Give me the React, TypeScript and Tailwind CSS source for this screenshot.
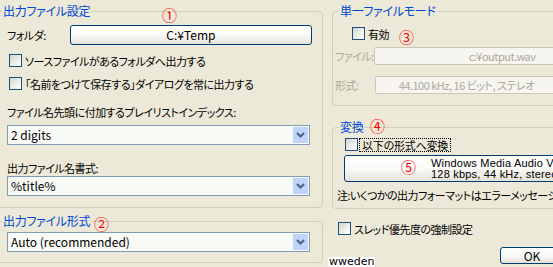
import React from 'react'

// XP style checkbox
function Check() {
  return (
    <span className="w-[13px] h-[13px] shrink-0 border border-[#1C5180] bg-linear-to-br from-[#D4D4CC] via-[#ECECE6] to-white" />
  )
}

function Combo({ value }: { value: string }) {
  return (
    <div className="w-[303px] h-[20px] border border-[#7F9DB9] bg-[#F8FAF5] flex items-center justify-between text-[12px] tracking-normal">
      <span className="pl-[3px]">{value}</span>
      <span className="w-[15px] h-[16px] mr-[1px] bg-[#C1D3FB] flex items-center justify-center">
        <svg width="9" height="6" viewBox="0 0 9 6">
          <polyline points="1,1 4.5,4.5 8,1" fill="none" stroke="#4D6185" strokeWidth="2" />
        </svg>
      </span>
    </div>
  )
}

function Mark({ n, className }: { n: string; className: string }) {
  return (
    <span className={'absolute text-[15px] leading-none tracking-normal text-[#FF0000] ' + className}>{n}</span>
  )
}

const legendCls = 'ml-[6px] px-[1px] text-[12px] tracking-[-0.3px] text-[#0046D5]'
const fieldCls = 'border border-[#D0D0BF] rounded-[4px] p-0 m-0 min-w-0'

export default function App() {
  return (
    <div className="relative w-[553px] h-[267px] overflow-hidden bg-[#ECE9D8] flex items-start text-[11px] tracking-[-0.5px] leading-[14px] text-black font-['Noto_Sans_CJK_JP',sans-serif] [font-feature-settings:'palt']">
      {/* 左列 */}
      <div className="-ml-[5px] w-[328px] shrink-0 flex flex-col">
        <fieldset className={fieldCls + ' mt-[4px]'}>
          <legend className={legendCls}>出力ファイル設定</legend>
          <div className="pl-[11px] pr-[10px] pb-[11px] flex flex-col">
            <div className="mt-[7px] flex items-center">
              <span className="w-[63px]">フォルダ:</span>
              <button className="w-[243px] h-[20px] border border-[#003C74] rounded-[3px] bg-linear-to-b from-white via-[#FAFAF7] to-[#E4E2D8] text-center text-[12px] tracking-normal">
                C:¥Temp
              </button>
            </div>
            <div className="mt-[9px] ml-[2px] h-[13px] flex items-center gap-[3px] whitespace-nowrap">
              <Check />
              <span>ソースファイルがあるフォルダへ出力する</span>
            </div>
            <div className="mt-[10px] ml-[2px] h-[13px] flex items-center gap-[3px] whitespace-nowrap">
              <Check />
              <span>「名前をつけて保存する」ダイアログを常に出力する</span>
            </div>
            <div className="mt-[15px] whitespace-nowrap">ファイル名先頭に付加するプレイリストインデックス:</div>
            <div className="mt-[6px]">
              <Combo value="2 digits" />
            </div>
            <div className="mt-[16px]">出力ファイル名書式:</div>
            <div className="mt-[1px]">
              <Combo value="%title%" />
            </div>
          </div>
        </fieldset>

        <fieldset className={fieldCls + ' mt-[6px]'}>
          <legend className={legendCls}>出力ファイル形式</legend>
          <div className="pl-[11px] pr-[10px] pb-[10px] pt-[4px]">
            <Combo value="Auto (recommended)" />
          </div>
        </fieldset>
      </div>

      {/* 右列 */}
      <div className="ml-[9px] w-[240px] shrink-0 flex flex-col">
        <fieldset className={fieldCls + ' mt-[4px]'}>
          <legend className={legendCls}>単一ファイルモード</legend>
          <div className="pb-[11px] flex flex-col">
            <div className="mt-[9px] ml-[19px] h-[13px] flex items-center gap-[3px]">
              <Check />
              <span>有効</span>
            </div>
            <div className="mt-[7px] flex items-center text-[#ACA899] whitespace-nowrap">
              <span className="w-[55px] pl-[2px]">ファイル:</span>
              <div className="w-[254px] h-[18px] border border-[#C9C7BA] rounded-[2px] bg-[#F6F5EF] pl-[94px] flex items-center">
                c:¥output.wav
              </div>
            </div>
            <div className="mt-[11px] flex items-center text-[#ACA899] whitespace-nowrap">
              <span className="w-[55px] pl-[2px]">形式:</span>
              <div className="w-[254px] h-[18px] border border-[#C9C7BA] rounded-[2px] bg-[#F6F5EF] pl-[23px] flex items-center">
                44.100 kHz, 16 ビット, ステレオ
              </div>
            </div>
          </div>
        </fieldset>

        <fieldset className={fieldCls + ' mt-[14px]'}>
          <legend className={legendCls}>変換</legend>
          <div className="pb-[6px] flex flex-col items-start">
            <div className="mt-[4px] ml-[12px] h-[13px] flex items-center gap-[2px] whitespace-nowrap">
              <Check />
              <span className="outline-1 outline-dotted outline-black px-[2px] leading-[12px] tracking-[-0.2px]">以下の形式へ変換</span>
            </div>
            <button className="mt-[4px] ml-[11px] w-[260px] h-[27px] shrink-0 border border-[#003C74] rounded-[3px] bg-linear-to-b from-white via-[#FAFAF7] to-[#E4E2D8] pl-[86px] text-left text-[11px] tracking-[0.2px] leading-[11px] whitespace-nowrap font-['Liberation_Sans',sans-serif]">
              <div>Windows Media Audio Voice</div>
              <div>128 kbps, 44 kHz, stereo</div>
            </button>
            <div className="mt-[6px] ml-[4px] whitespace-nowrap">注:いくつかの出力フォーマットはエラーメッセージを</div>
          </div>
        </fieldset>

        <div className="mt-[13px] ml-[6px] h-[13px] flex items-center gap-[3px] whitespace-nowrap">
          <Check />
          <span>スレッド優先度の強制設定</span>
        </div>
        <button className="mt-[12px] ml-[168px] w-[64px] h-[17px] border border-[#003C74] rounded-[3px] bg-linear-to-b from-white via-[#FAFAF7] to-[#E4E2D8] text-center text-[12px] tracking-normal leading-[15px]">
          OK
        </button>
      </div>

      {/* 注記 */}
      <Mark n="①" className="left-[162px] top-[7px]" />
      <Mark n="②" className="left-[94px] top-[216px]" />
      <Mark n="③" className="left-[399px] top-[29px]" />
      <Mark n="④" className="left-[370px] top-[118px]" />
      <Mark n="⑤" className="left-[401px] top-[159px]" />
      <span className="absolute left-[328px] top-[257px] bg-white px-[1px] text-[11px] leading-[10px] tracking-normal font-['DejaVu_Sans',sans-serif]">
        wweden
      </span>
    </div>
  )
}
